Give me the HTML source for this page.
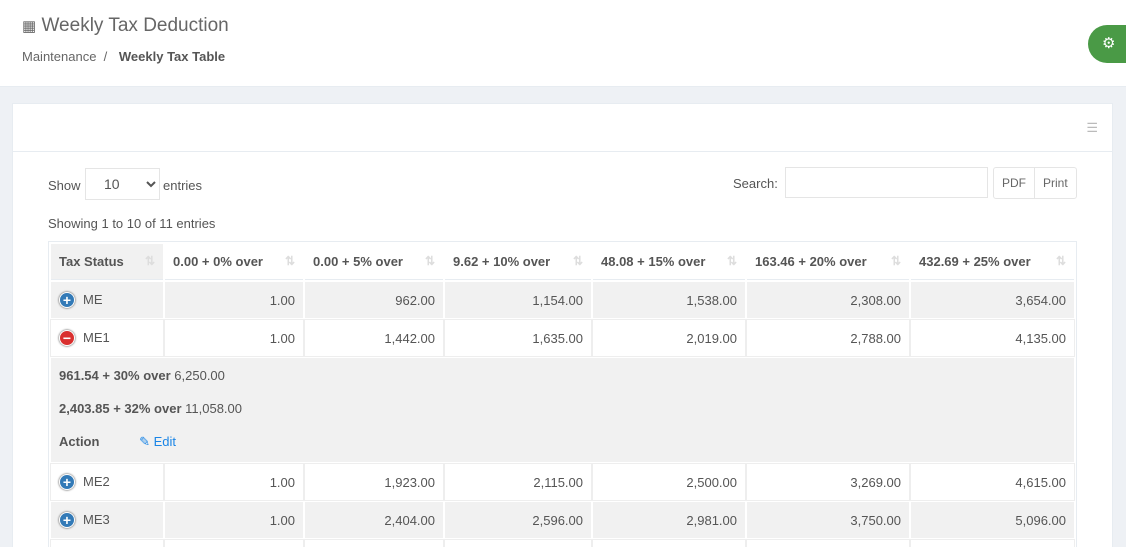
<!DOCTYPE html>
<html><head><meta charset="utf-8"><style>
*{box-sizing:border-box;margin:0;padding:0}
html,body{width:1126px;height:547px;overflow:hidden}
body{background:#eef1f5;font-family:"Liberation Sans",sans-serif;font-size:13px;color:#555;position:relative}
.top{position:absolute;left:0;top:0;width:1126px;height:87px;background:#fff;border-bottom:1px solid #e7ecf1}
.title{position:absolute;left:22px;top:15px;font-size:19px;color:#666;font-weight:300}
.bc{position:absolute;left:22px;top:49px;font-size:13px;color:#666}
.bc b{color:#555;margin-left:8px}
.gear{position:absolute;left:1088px;top:25px;width:38px;height:38px;background:#4a9a46;border-radius:19px 0 0 19px}
.panel{position:absolute;left:12px;top:103px;width:1101px;height:444px;background:#fff;border:1px solid #e7ecf1;border-bottom:none;overflow:hidden}
.ph{height:48px;border-bottom:1px solid #e7ecf1}
.abs{position:absolute}
select{position:absolute;left:72px;top:64px;width:75px;height:32px;border:1px solid #e5e5e5;background:#fff;font-size:14px;padding-left:14px;color:#555}
.inp{position:absolute;left:772px;top:63px;width:203px;height:31px;border:1px solid #e5e5e5}
.btns{position:absolute;left:980px;top:63px;height:32px;border:1px solid #e5e5e5;border-radius:3px;display:flex;font-size:12px;color:#666}
.btns span{padding:0 8px;line-height:30px}
table{position:absolute;left:35px;top:137px;width:1029px;border-collapse:separate;border-spacing:2px;border:1px solid #e7ecf1}
td,th{height:36px;padding:0 8px;font-size:13px}
th{text-align:left;font-weight:bold;color:#555;position:relative;background:#fff;border-bottom:1px solid #e7ecf1}
th:first-child{background:#f1f1f1}
th i{position:absolute;right:8px;top:10px;color:#ddd;font-style:normal;font-size:12px}
td{text-align:right;color:#555}
td:first-child{text-align:left}
tr.g td{background:#f1f1f1}
tr.w td{box-shadow:0 0 0 1px #eee}
.ic{display:inline-block;width:16px;height:16px;border-radius:50%;color:#fff;text-align:center;line-height:15px;font-weight:bold;font-size:14px;margin-right:8px;vertical-align:middle;box-shadow:0 0 2px #444;border:1px solid #fff}
.b{background:#337ab7}.r{background:#d9302f}
.exp td{background:#f1f1f1;text-align:left;vertical-align:top;padding:0 8px}
.exp div{height:104px;padding-top:9px}
.exp p{height:33px;line-height:17px}
</style></head><body>
<div class="top">
<div class="title"><span style="font-size:15px">&#9638;</span> Weekly Tax Deduction</div>
<div class="bc">Maintenance &nbsp;/ <b>Weekly Tax Table</b></div>
<div class="gear"><span style="position:absolute;left:14px;top:9px;color:#fff;font-size:15px">&#9881;</span></div>
</div>
<div class="panel">
<div class="ph"><span class="abs" style="right:14px;top:16px;color:#bbb;font-size:13px">&#9776;</span></div>
<div class="abs" style="left:35px;top:74px">Show</div>
<select><option>10</option></select>
<div class="abs" style="left:150px;top:74px">entries</div>
<div class="abs" style="left:720px;top:72px">Search:</div>
<div class="inp"></div>
<div class="btns"><span style="border-right:1px solid #e5e5e5">PDF</span><span>Print</span></div>
<div class="abs" style="left:35px;top:112px">Showing 1 to 10 of 11 entries</div>
<table>
<tr><th style="width:112px">Tax Status<i>&#8645;</i></th><th style="width:138px">0.00 + 0% over<i>&#8645;</i></th><th style="width:138px">0.00 + 5% over<i>&#8645;</i></th><th style="width:146px">9.62 + 10% over<i>&#8645;</i></th><th style="width:152px">48.08 + 15% over<i>&#8645;</i></th><th style="width:162px">163.46 + 20% over<i>&#8645;</i></th><th>432.69 + 25% over<i>&#8645;</i></th></tr>
<tr class="g"><td><span class="ic b">+</span>ME</td><td>1.00</td><td>962.00</td><td>1,154.00</td><td>1,538.00</td><td>2,308.00</td><td>3,654.00</td></tr>
<tr class="w"><td><span class="ic r">&minus;</span>ME1</td><td>1.00</td><td>1,442.00</td><td>1,635.00</td><td>2,019.00</td><td>2,788.00</td><td>4,135.00</td></tr>
<tr class="exp"><td colspan="7"><div><p><b>961.54 + 30% over</b> 6,250.00</p><p><b>2,403.85 + 32% over</b> 11,058.00</p><p><b>Action</b> <span style="margin-left:36px;color:#1a85e6">&#9998; Edit</span></p></div></td></tr>
<tr class="w"><td><span class="ic b">+</span>ME2</td><td>1.00</td><td>1,923.00</td><td>2,115.00</td><td>2,500.00</td><td>3,269.00</td><td>4,615.00</td></tr>
<tr class="g"><td><span class="ic b">+</span>ME3</td><td>1.00</td><td>2,404.00</td><td>2,596.00</td><td>2,981.00</td><td>3,750.00</td><td>5,096.00</td></tr>
<tr class="w"><td></td><td></td><td></td><td></td><td></td><td></td><td></td></tr>
</table>
</div>
</body></html>
